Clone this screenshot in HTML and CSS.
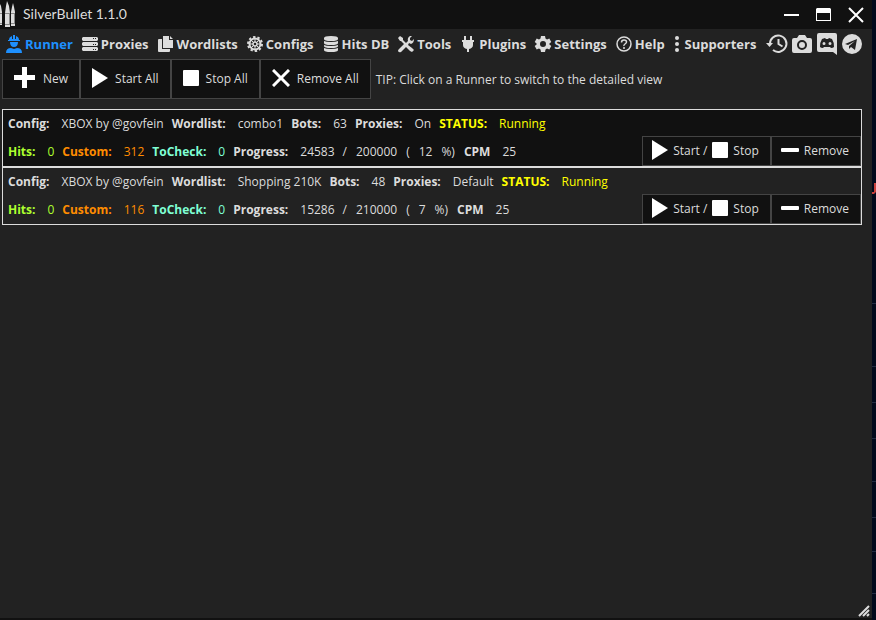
FILE: index.html
```html
<!DOCTYPE html>
<html lang="en">
<head>
  <meta charset="UTF-8">
  <title>SilverBullet 1.1.0</title>
  <meta name="viewport" content="width=device-width, initial-scale=1.0">
  <link rel="stylesheet" href="styles.css">
</head>
<body>

  <svg class="sprite" aria-hidden="true">
    <symbol id="i-play" viewBox="0 0 16 20"><path d="M0 0l16 10L0 20z"/></symbol>
    <symbol id="i-stop" viewBox="0 0 16 16"><rect width="16" height="16" rx="1"/></symbol>
    <symbol id="i-minus" viewBox="0 0 18 16"><rect y="6" width="18" height="4" rx="1"/></symbol>
  </svg>

  <div class="window">
    <header class="titlebar">
      <svg class="logo" viewBox="0 0 16 27">
        <path fill="#ddd" d="M0 3l1 2 1 6v13H0zM7 0l2 5 1 7v14H5V12l1-7zM13 2l1 4 1 5v14h-4V11l1-5z"/>
        <path stroke="#888" d="M5 12.500h5M5 23.500h5M11 12.500h4M11 22.500h4M0 12.500h2M0 22.500h2M9.500 13v10M14.500 13v9"/>
      </svg>
      <h1>SilverBullet 1.1.0</h1>
      <div class="window-buttons">
        <button aria-label="Minimize"><svg width="16" height="16" viewBox="0 0 16 16"><path d="M0 8h15" stroke="#fff" stroke-width="2"/></svg></button>
        <button aria-label="Maximize"><svg width="16" height="16" viewBox="0 0 16 16"><path fill="#fff" fill-rule="evenodd" d="M1 1h13l1 1v12H0V2zM1 6v7h13V6z"/></svg></button>
        <button aria-label="Close"><svg width="16" height="16" viewBox="0 0 16 16"><path d="M1 1l14 14M15 1L1 15" stroke="#fff" stroke-width="2"/></svg></button>
      </div>
    </header>

    <nav class="menu">
      <a href="#" class="active"><svg viewBox="0 0 16 18"><path d="M3 5q0-3 3-4v3h1V0h2v4h1V1q3 1 3 4h1v1H2V5zM4 7h8q0 5-4 5T4 7zM0 18q0-5 5-5l3 1 3-1q5 0 5 5z"/></svg>Runner</a>
      <a href="#"><svg viewBox="0 0 16 16"><path fill-rule="evenodd" d="M1 1h14l1 1v2l-1 1H1L0 4V2zM11 2v1h1V2zM13 2v1h1V2zM1 6h14l1 1v2l-1 1H1L0 9V7zM11 8v1h1V8zM13 8v1h1V8zM1 11h14l1 1v2l-1 1H1l-1-1v-2zM11 13v1h1v-1zM13 13v1h1v-1z"/></svg>Proxies</a>
      <a href="#"><svg viewBox="0 0 16 16"><path d="M5 0h6v4h4v8H5zM12 0l3 3h-3zM1 3h3v10h8v2q0 1-1 1H1q-1 0-1-1V4q0-1 1-1z"/></svg>Wordlists</a>
      <a href="#"><svg viewBox="0 0 16 16"><g fill="none" stroke="currentColor"><circle cx="8" cy="8" r="5.500" stroke-width="2"/><circle cx="8" cy="8" r="7" stroke-width="2" stroke-dasharray="2.400 2"/><circle cx="8" cy="8" r="2" stroke-width="1.500"/><path d="M8 2v4M8 10v4M2 8h4M10 8h4M4 4l3 3M9 9l3 3M12 4L9 7M7 9l-3 3"/></g></svg>Configs</a>
      <a href="#"><svg viewBox="0 0 16 16"><path d="M1 2q0-2 7-2t7 2v1q0 2-7 2T1 3zM1 5q2 1 7 1t7-1v2q0 2-7 2T1 7zM1 9q2 1 7 1t7-1v1q0 2-7 2t-7-2zM1 12q2 1 7 1t7-1v2q0 2-7 2t-7-2z"/></svg>Hits DB</a>
      <a href="#"><svg viewBox="0 0 16 16"><path d="M0 2l2-2 3 2v2l3 3 2-2q-1-3 2-5h2l-2 2v2l2 1 2-2q0 4-3 5l-2-1-1 2 4 3 2 2-2 2-2-1-4-4-5 5q-2 1-3-1 0-1 1-2l5-5-3-3H2z"/></svg>Tools</a>
      <a href="#"><svg viewBox="0 0 16 16"><path d="M4 0h2v4h4V0h2v4h2v2h-1v3q0 3-4 4v3H7v-3q-4-1-4-4V6H2V4h2z"/></svg>Plugins</a>
      <a href="#"><svg viewBox="0 0 16 16"><path fill-rule="evenodd" d="M6 0h4l.5 2.500L12 3.400l2.300-.9 2 3.500-1.900 1.500v1l1.900 1.500-2 3.500-2.300-.9-1.500.9L10 16H6l-.5-2.500-1.500-.9-2.300.9-2-3.500L1.600 8.500v-1L-.3 6l2-3.500 2.300.9 1.500-.9zM8 5a3 3 0 100 6 3 3 0 000-6z"/></svg>Settings</a>
      <a href="#"><svg viewBox="0 0 16 16"><g fill="none" stroke="currentColor" stroke-width="1.500"><circle cx="8" cy="8" r="7"/><path d="M5.500 6.500Q5.500 4 8 4t2.500 2q0 1-1.500 2T8 10M8 11v2"/></g></svg>Help</a>
      <a href="#" class="supporters"><svg viewBox="0 0 6 16"><circle cx="3" cy="2" r="2"/><circle cx="3" cy="8" r="2"/><circle cx="3" cy="14" r="2"/></svg>Supporters</a>
      <div class="links">
        <a href="#" aria-label="History"><svg viewBox="0 0 20 20"><g fill="none" stroke="currentColor" stroke-width="2"><path d="M3 10a8.200 8.200 0 1 1 3 6"/><path d="M11.500 5v5l4 2.500"/></g><path d="M-1 9h7l-3.500 4z"/></svg></a>
        <a href="#" aria-label="Screenshot"><svg viewBox="0 0 20 20"><path fill-rule="evenodd" d="M7 1h6l2 3h3q2 0 2 2v11q0 2-2 2H2q-2 0-2-2V6q0-2 2-2h3zM10 6a5 5 0 100 10 5 5 0 000-10zM10 8a3 3 0 110 6 3 3 0 010-6z"/></svg></a>
        <a href="#" aria-label="Discord"><svg viewBox="0 0 20 22"><path fill-rule="evenodd" d="M2 0h16q2 0 2 2v20l-4-3H2q-2 0-2-2V2q0-2 2-2zM3 14q1 1 3 1l1-1h6l1 1q2 0 3-1 0-5-2-8l-3-1-1 1H9L8 5 5 6q-2 3-2 8zM7 9a1.500 1.500 0 110 3 1.500 1.500 0 010-3zM13 9a1.500 1.500 0 110 3 1.500 1.500 0 010-3z"/></svg></a>
        <a href="#" aria-label="Telegram"><svg viewBox="0 0 20 20"><path fill-rule="evenodd" d="M10 0a10 10 0 100 20 10 10 0 000-20zM15 5l-2 11-4-3-2 2v-3l6-5-7 4-3-1z"/></svg></a>
      </div>
    </nav>

    <div class="toolbar">
      <button><svg width="22" height="22" viewBox="0 0 22 22"><path d="M8 0h5v8h8v5h-8v8H8v-8H0V8h8z"/></svg>New</button>
      <button><svg width="16" height="20"><use href="#i-play"/></svg>Start All</button>
      <button><svg width="16" height="16"><use href="#i-stop"/></svg>Stop All</button>
      <button><svg width="18" height="18" viewBox="0 0 18 18"><path d="M1 1l16 16M17 1L1 17" stroke="#fff" stroke-width="3"/></svg>Remove All</button>
      <p>TIP: Click on a Runner to switch to the detailed view</p>
    </div>

    <main class="runners">
      <section class="runner selected">
        <div class="line">
          <b>Config:</b><span>XBOX by @govfein</span>
          <b>Wordlist:</b><span>combo1</span>
          <b>Bots:</b><span>63</span>
          <b>Proxies:</b><span>On</span>
          <b class="status">STATUS:</b><span class="status">Running</span>
        </div>
        <div class="line">
          <b class="hits">Hits:</b><span class="hits">0</span>
          <b class="custom">Custom:</b><span class="custom">312</span>
          <b class="tocheck">ToCheck:</b><span class="tocheck">0</span>
          <b>Progress:</b><span>24583</span><i>/</i><i>200000</i><i>(</i><i>12</i><i>%)</i>
          <b>CPM</b><i>25</i>
        </div>
        <div class="actions">
          <button><svg width="16" height="20"><use href="#i-play"/></svg>Start / <svg width="16" height="16"><use href="#i-stop"/></svg>Stop</button>
          <button><svg width="18" height="16"><use href="#i-minus"/></svg>Remove</button>
        </div>
      </section>

      <section class="runner">
        <div class="line">
          <b>Config:</b><span>XBOX by @govfein</span>
          <b>Wordlist:</b><span>Shopping 210K</span>
          <b>Bots:</b><span>48</span>
          <b>Proxies:</b><span>Default</span>
          <b class="status">STATUS:</b><span class="status">Running</span>
        </div>
        <div class="line">
          <b class="hits">Hits:</b><span class="hits">0</span>
          <b class="custom">Custom:</b><span class="custom">116</span>
          <b class="tocheck">ToCheck:</b><span class="tocheck">0</span>
          <b>Progress:</b><span>15286</span><i>/</i><i>210000</i><i>(</i><i>7</i><i>%)</i>
          <b>CPM</b><i>25</i>
        </div>
        <div class="actions">
          <button><svg width="16" height="20"><use href="#i-play"/></svg>Start / <svg width="16" height="16"><use href="#i-stop"/></svg>Stop</button>
          <button><svg width="18" height="16"><use href="#i-minus"/></svg>Remove</button>
        </div>
      </section>
    </main>

    <svg class="grip" width="12" height="12" viewBox="0 0 12 12"><path d="M1 11L11 1M5 11l6-6M9 11l2-2" stroke="#ddd" stroke-width="2"/></svg>
  </div>

  <!-- strip of the desktop behind the window -->
  <svg class="desktop" width="4" height="620" viewBox="0 0 4 620" aria-hidden="true">
    <path fill="#c8403c" d="M2 183h2v9l-2 2H0v-2h2z"/>
    <path stroke="#222c42" d="M0 303.500h4M0 366.500h4M0 402.500h4M0 438.500h4M0 481.500h4M0 517.500h4M0 551.500h4M0 593.500h4"/>
  </svg>

</body>
</html>
```

FILE: styles.css
```css
* { box-sizing: border-box; }

body {
  display: flex;
  margin: 0;
  background-color: #020a1c;
  color: #dcdcdc;
  font-family: "Open Sans", "Noto Sans", sans-serif;
  font-size: 12px;
}

svg {
  fill: currentColor;
  flex: none;
}

a {
  color: inherit;
  text-decoration: none;
}

button {
  font: inherit;
  color: inherit;
  cursor: pointer;
}

.sprite {
  display: none;
}

.window {
  display: flex;
  flex: 1;
  flex-direction: column;
  min-height: 100vh;
  background-color: #222;
  border-bottom: 2px solid #111;
}

.titlebar {
  display: flex;
  align-items: center;
  height: 29px;
  background-color: #111;
}

.logo {
  width: 16px;
  height: 27px;
}

h1 {
  flex: 1;
  margin: 0 0 0 7px;
  padding-bottom: 2px;
  font-family: Lato, sans-serif;
  font-size: 14px;
  font-weight: normal;
}

.window-buttons {
  display: flex;
  gap: 16px;
  padding-right: 8px;
}

.window-buttons button {
  display: flex;
  padding: 0;
  border: none;
  background: none;
}

.menu {
  display: flex;
  align-items: center;
  gap: 9px;
  height: 30px;
  padding: 0 10px 0 6px;
  font-size: 13px;
  font-weight: bold;
  line-height: 16px;
  white-space: nowrap;
}

.menu a {
  display: flex;
  align-items: center;
  gap: 3px;
}

.menu svg {
  width: 16px;
  height: 18px;
  overflow: visible;
}

.menu .supporters {
  gap: 5px;
}

.menu .supporters svg {
  width: 6px;
  height: 16px;
}

.menu .active {
  color: #1e90ff;
}

.links {
  display: flex;
  gap: 5px;
  margin-left: auto;
}

.menu .links svg {
  width: 20px;
  height: 22px;
}

.toolbar {
  display: flex;
  align-items: center;
  padding-left: 2px;
}

.toolbar button,
.actions button {
  display: flex;
  align-items: center;
  border: 1px solid #444;
  background-color: #111;
}

.toolbar button {
  gap: 7px;
  height: 40px;
  padding: 0 11px 2px 11px;
}

.toolbar svg,
.actions svg {
  fill: #fff;
}

.toolbar p {
  margin: 0 0 0 5px;
}

.runners {
  flex: 1;
  padding: 10px 10px 0 2px;
}

.runner {
  position: relative;
  padding-left: 5px;
  border: 1px solid #dcdcdc;
}

.runner.selected {
  background-color: #111;
}

.line {
  display: flex;
  align-items: center;
  height: 28px;
  padding-bottom: 2px;
}

.line b {
  margin-right: 12px;
}

.line span {
  margin-right: 8px;
}

.line i {
  margin-right: 9px;
  font-style: normal;
}

.status { color: #ff0; }
.hits { color: #adff2f; }
.custom { color: #ff8c00; }
.tocheck { color: #7fffd4; }

/* buttons sit over the lower right corner of the runner */
.actions {
  position: absolute;
  right: 0;
  bottom: 0;
  display: flex;
}

.actions button {
  gap: 5px;
  height: 30px;
  padding: 0 11px 2px 9px;
}

.grip {
  align-self: flex-end;
  margin: 0 2px 1px 0;
}
```
